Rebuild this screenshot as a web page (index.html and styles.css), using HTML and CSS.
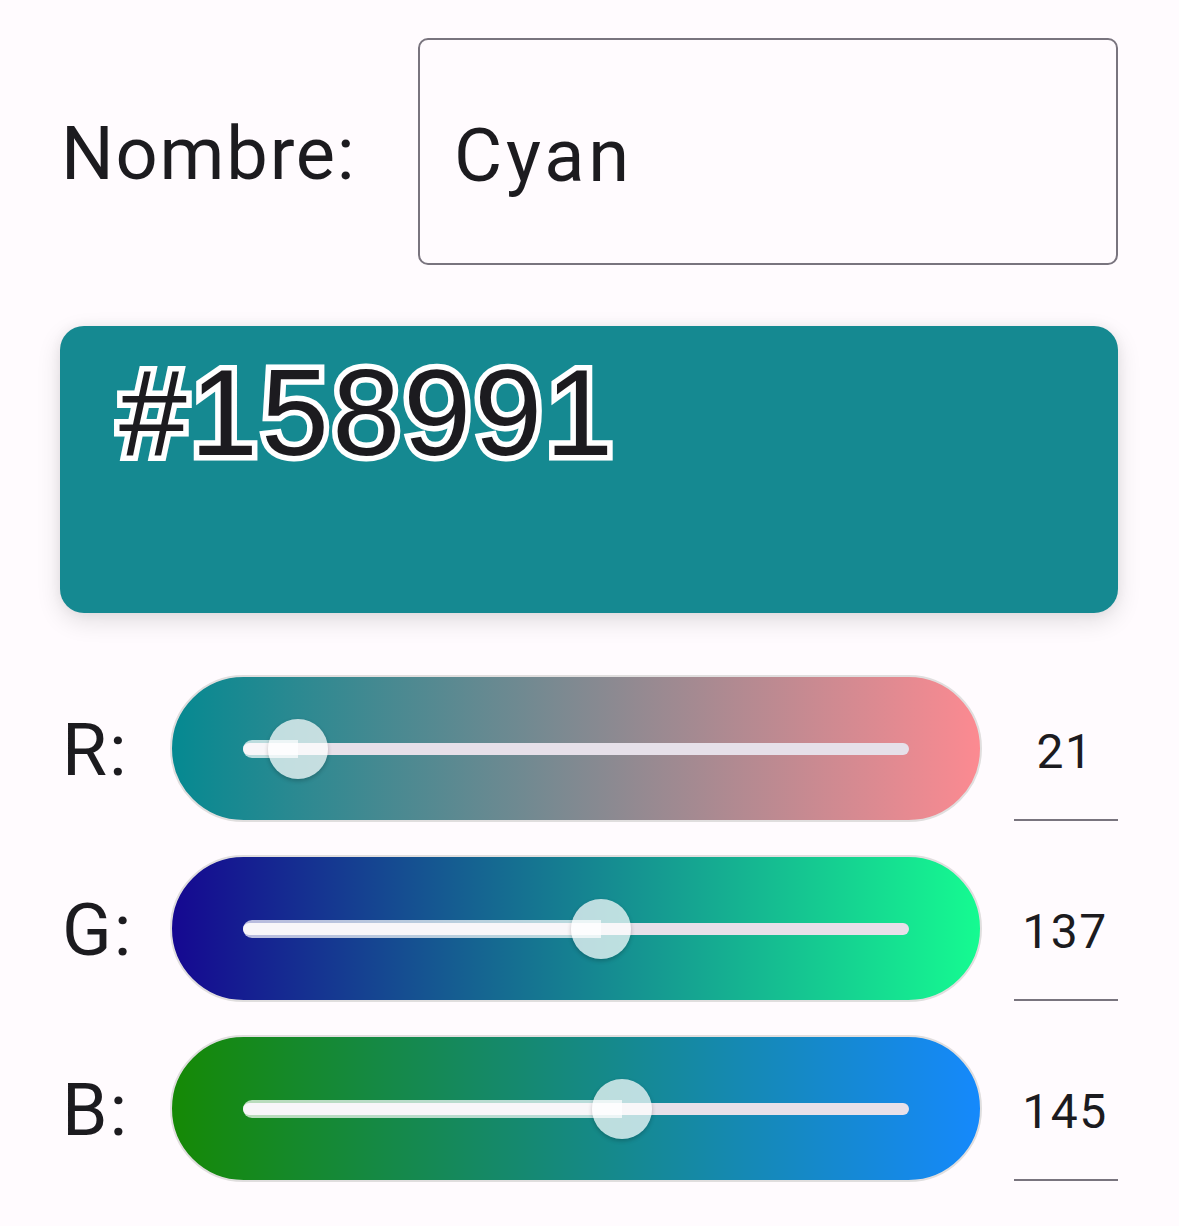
FILE: index.html
```html
<!DOCTYPE html>
<html lang="es">
<head>
<meta charset="utf-8">
<title>Color</title>
<link rel="stylesheet" href="styles.css">
</head>
<body>
<main class="screen">
  <div class="name-row">
    <span class="name-label">Nombre:</span>
    <div class="name-field"><span class="name-value">Cyan</span></div>
  </div>

  <div class="swatch">
    <span class="hex">#158991</span>
  </div>

  <div class="channels">
    <div class="channel">
      <span class="channel-label">R:</span>
      <div class="slider slider-r">
        <div class="track">
          <div class="track-active" style="width:8.235%"></div>
          <div class="thumb" style="left:8.235%"></div>
        </div>
      </div>
      <div class="value-field"><span class="value">21</span></div>
    </div>

    <div class="channel">
      <span class="channel-label">G:</span>
      <div class="slider slider-g">
        <div class="track">
          <div class="track-active" style="width:53.725%"></div>
          <div class="thumb" style="left:53.725%"></div>
        </div>
      </div>
      <div class="value-field"><span class="value">137</span></div>
    </div>

    <div class="channel">
      <span class="channel-label">B:</span>
      <div class="slider slider-b">
        <div class="track">
          <div class="track-active" style="width:56.863%"></div>
          <div class="thumb" style="left:56.863%"></div>
        </div>
      </div>
      <div class="value-field"><span class="value">145</span></div>
    </div>
  </div>
</main>
</body>
</html>
```

FILE: styles.css
```css
html, body {
  margin: 0;
  padding: 0;
  background: #fffbfe;
}

body {
  font-family: Roboto, "Noto Sans", sans-serif;
  color: #1c1b1f;
}

.screen {
  width: 1179px;
  height: 1226px;
  box-sizing: border-box;
  padding: 38px 61px 0 60px;
  display: flex;
  flex-direction: column;
}

/* ---------- name row ---------- */
.name-row {
  display: flex;
  align-items: center;
  height: 227px;
}

.name-label {
  flex: 1;
  font-size: 74px;
  letter-spacing: 1.8px;
  line-height: 1;
  padding: 4px 0 0 1px;
}

.name-field {
  width: 700px;
  height: 227px;
  box-sizing: border-box;
  border: 2px solid #79747e;
  border-radius: 10px;
  display: flex;
  align-items: center;
  padding: 8px 0 0 34px;
}

.name-value {
  font-size: 74px;
  letter-spacing: 3.8px;
  line-height: 1;
}

/* ---------- swatch ---------- */
.swatch {
  margin-top: 61px;
  height: 287px;
  border-radius: 24px;
  background: #158991;
  box-shadow: 0 8px 24px rgba(0, 0, 0, 0.12), 0 0 12px rgba(0, 0, 0, 0.05);
  padding: 26px 0 0 59px;
  box-sizing: border-box;
}

.hex {
  display: inline-block;
  font-family: "Liberation Sans", Arial, sans-serif;
  font-size: 122px;
  line-height: 1;
  letter-spacing: 3.2px;
  color: #1c1b1f;
  -webkit-text-stroke: 11px #ffffff;
  paint-order: stroke fill;
}

/* ---------- channels ---------- */
.channels {
  margin-top: 62px;
  display: flex;
  flex-direction: column;
  gap: 33px;
}

.channel {
  display: flex;
  align-items: stretch;
  height: 147px;
}

.channel-label {
  width: 110px;
  flex: none;
  display: flex;
  align-items: center;
  font-size: 73px;
  letter-spacing: 2px;
  padding: 3px 0 0 2px;
  box-sizing: border-box;
}

.slider {
  width: 812px;
  flex: none;
  box-sizing: border-box;
  border: 2px solid #e0dede;
  border-radius: 74px;
  display: flex;
  align-items: center;
  padding: 0 71px;
}

.slider-r { background: linear-gradient(90deg, #058991, #fc8a91); }
.slider-g { background: linear-gradient(90deg, #150891, #15fb91); }
.slider-b { background: linear-gradient(90deg, #158905, #1589fc); }

.track {
  position: relative;
  flex: 1;
  height: 12px;
  border-radius: 6px;
  background: #e6e0e9;
}

.track-active {
  position: absolute;
  left: 0;
  top: -3px;
  height: 18px;
  border-radius: 9px 0 0 9px;
  background: rgba(255, 255, 255, 0.7);
}

.thumb {
  position: absolute;
  top: 50%;
  width: 60px;
  height: 60px;
  margin: -30px 0 0 -30px;
  border-radius: 50%;
  background: rgba(255, 255, 255, 0.72);
  box-shadow: 0 2px 4px rgba(0, 0, 0, 0.22);
}

.value-field {
  margin-left: 32px;
  width: 104px;
  flex: none;
  box-sizing: border-box;
  border-bottom: 2px solid #79747e;
  height: 146px;
  display: flex;
  align-items: center;
  justify-content: center;
  padding: 10px 2px 0 0;
}

.value {
  font-size: 48px;
  letter-spacing: 1.5px;
  line-height: 1;
}
```
